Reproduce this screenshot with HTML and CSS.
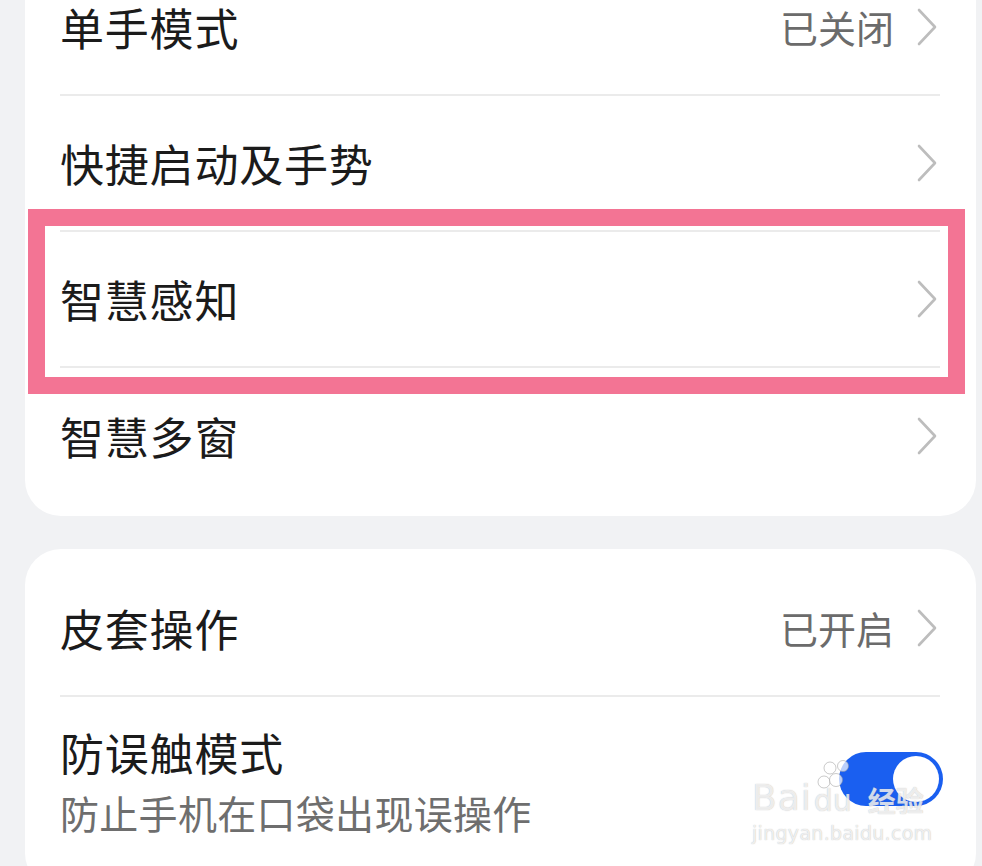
FILE: index.html
```html
<!DOCTYPE html>
<html lang="zh-CN">
<head>
<meta charset="utf-8">
<title>设置</title>
<link rel="stylesheet" href="styles.css">
</head>
<body>
<div class="page">
  <section class="card card-top">
    <div class="row">
      <span class="title">单手模式</span>
      <span class="value">已关闭</span>
      <svg class="chev" viewBox="0 0 22 40" width="22" height="40"><path d="M3 3 L19 20 L3 37" /></svg>
    </div>
    <div class="row">
      <span class="title">快捷启动及手势</span>
      <svg class="chev" viewBox="0 0 22 40" width="22" height="40"><path d="M3 3 L19 20 L3 37" /></svg>
    </div>
    <div class="row">
      <span class="title">智慧感知</span>
      <svg class="chev" viewBox="0 0 22 40" width="22" height="40"><path d="M3 3 L19 20 L3 37" /></svg>
    </div>
    <div class="row last">
      <span class="title">智慧多窗</span>
      <svg class="chev" viewBox="0 0 22 40" width="22" height="40"><path d="M3 3 L19 20 L3 37" /></svg>
    </div>
  </section>

  <section class="card card-bottom">
    <div class="row">
      <span class="title">皮套操作</span>
      <span class="value">已开启</span>
      <svg class="chev" viewBox="0 0 22 40" width="22" height="40"><path d="M3 3 L19 20 L3 37" /></svg>
    </div>
    <div class="row tall last">
      <div class="texts">
        <span class="title">防误触模式</span>
        <span class="sub">防止手机在口袋出现误操作</span>
      </div>
      <span class="toggle"><span class="knob"></span></span>
    </div>
  </section>

  <div class="highlight"></div>

  <div class="watermark">
    <div class="wm-logo">
      <span class="wm-bai">Bai</span>
      <span class="wm-paw">
        <svg viewBox="0 0 50 50" width="50" height="50">
          <circle cx="14" cy="10" r="6"/>
          <circle cx="27" cy="8" r="5.5"/>
          <circle cx="8" cy="24" r="6"/>
          <circle cx="20" cy="22" r="6.5"/>
        </svg>
        <span class="wm-du">du</span>
      </span>
      <span class="wm-jy">经验</span>
    </div>
    <div class="wm-url">jingyan.baidu.com</div>
  </div>
</div>
</body>
</html>
```

FILE: styles.css
```css
* { box-sizing: border-box; }
html, body {
  margin: 0;
  padding: 0;
  background: #f1f2f4;
  overflow: hidden;
}
body {
  font-family: "Noto Sans CJK SC", "Noto Sans", sans-serif;
}
.page {
  position: relative;
  width: 982px;
  height: 866px;
  padding: 0 6px 0 25px;
  display: flex;
  flex-direction: column;
  gap: 33px;
}
.card {
  background: #ffffff;
  border-radius: 36px;
  padding: 12px 36px 12px 35px;
}
.card-top {
  margin-top: -52px;
}
.card-bottom {
  height: 340px;
}
.row {
  height: 136px;
  display: flex;
  align-items: center;
  border-bottom: 2px solid #ebebeb;
}
.row.last {
  border-bottom: none;
}
.row.tall {
  height: 190px;
  align-items: flex-start;
}
.title {
  font-size: 44px;
  color: #1b1b1b;
  line-height: 1;
  flex: 1;
  letter-spacing: 0.8px;
}
.value {
  font-size: 38px;
  color: #6b6b6b;
  line-height: 1;
  margin-right: 22px;
}
.chev {
  width: 22px;
  height: 40px;
  margin-right: 2px;
}
.chev path {
  fill: none;
  stroke: #bdbdbd;
  stroke-width: 2.6;
  stroke-linecap: round;
  stroke-linejoin: round;
}
.texts {
  flex: 1;
  display: flex;
  flex-direction: column;
  padding-top: 33px;
  gap: 19px;
}
.sub {
  font-size: 39px;
  color: #6e6e6e;
  line-height: 1;
  letter-spacing: 0.3px;
}
.toggle {
  margin-top: 55px;
  margin-right: -3px;
  width: 104px;
  height: 54px;
  border-radius: 27px;
  background: #1a5ff0;
  display: flex;
  align-items: center;
  justify-content: flex-end;
  padding: 4px;
}
.knob {
  width: 46px;
  height: 46px;
  border-radius: 50%;
  background: #ffffff;
}
.highlight {
  position: absolute;
  left: 28px;
  top: 209px;
  width: 937px;
  height: 185px;
  border: 17px solid #f37494;
  pointer-events: none;
}
.watermark {
  position: absolute;
  left: 752px;
  top: 758px;
  width: 185px;
  color: rgba(255, 255, 255, 0.75);
  text-shadow: 0 0 1px rgba(120, 120, 120, 0.55);
  font-family: "DejaVu Sans", sans-serif;
  pointer-events: none;
}
.wm-logo {
  display: flex;
  align-items: flex-end;
  height: 58px;
}
.wm-bai {
  font-size: 36px;
  font-weight: 400;
  line-height: 1;
  letter-spacing: 1px;
}
.wm-paw {
  position: relative;
  width: 56px;
  height: 58px;
}
.wm-paw svg {
  position: absolute;
  left: 4px;
  top: 0;
}
.wm-paw circle {
  fill: rgba(255, 255, 255, 0.7);
  stroke: rgba(150, 150, 150, 0.5);
  stroke-width: 1;
}
.wm-du {
  position: absolute;
  left: 2px;
  bottom: 0;
  font-size: 30px;
  line-height: 1;
}
.wm-jy {
  font-family: "Noto Sans CJK SC", sans-serif;
  font-size: 28px;
  line-height: 1;
  font-weight: 700;
  margin-bottom: 2px;
}
.wm-url {
  font-size: 19px;
  margin-top: 6px;
  letter-spacing: 0.3px;
}
```
